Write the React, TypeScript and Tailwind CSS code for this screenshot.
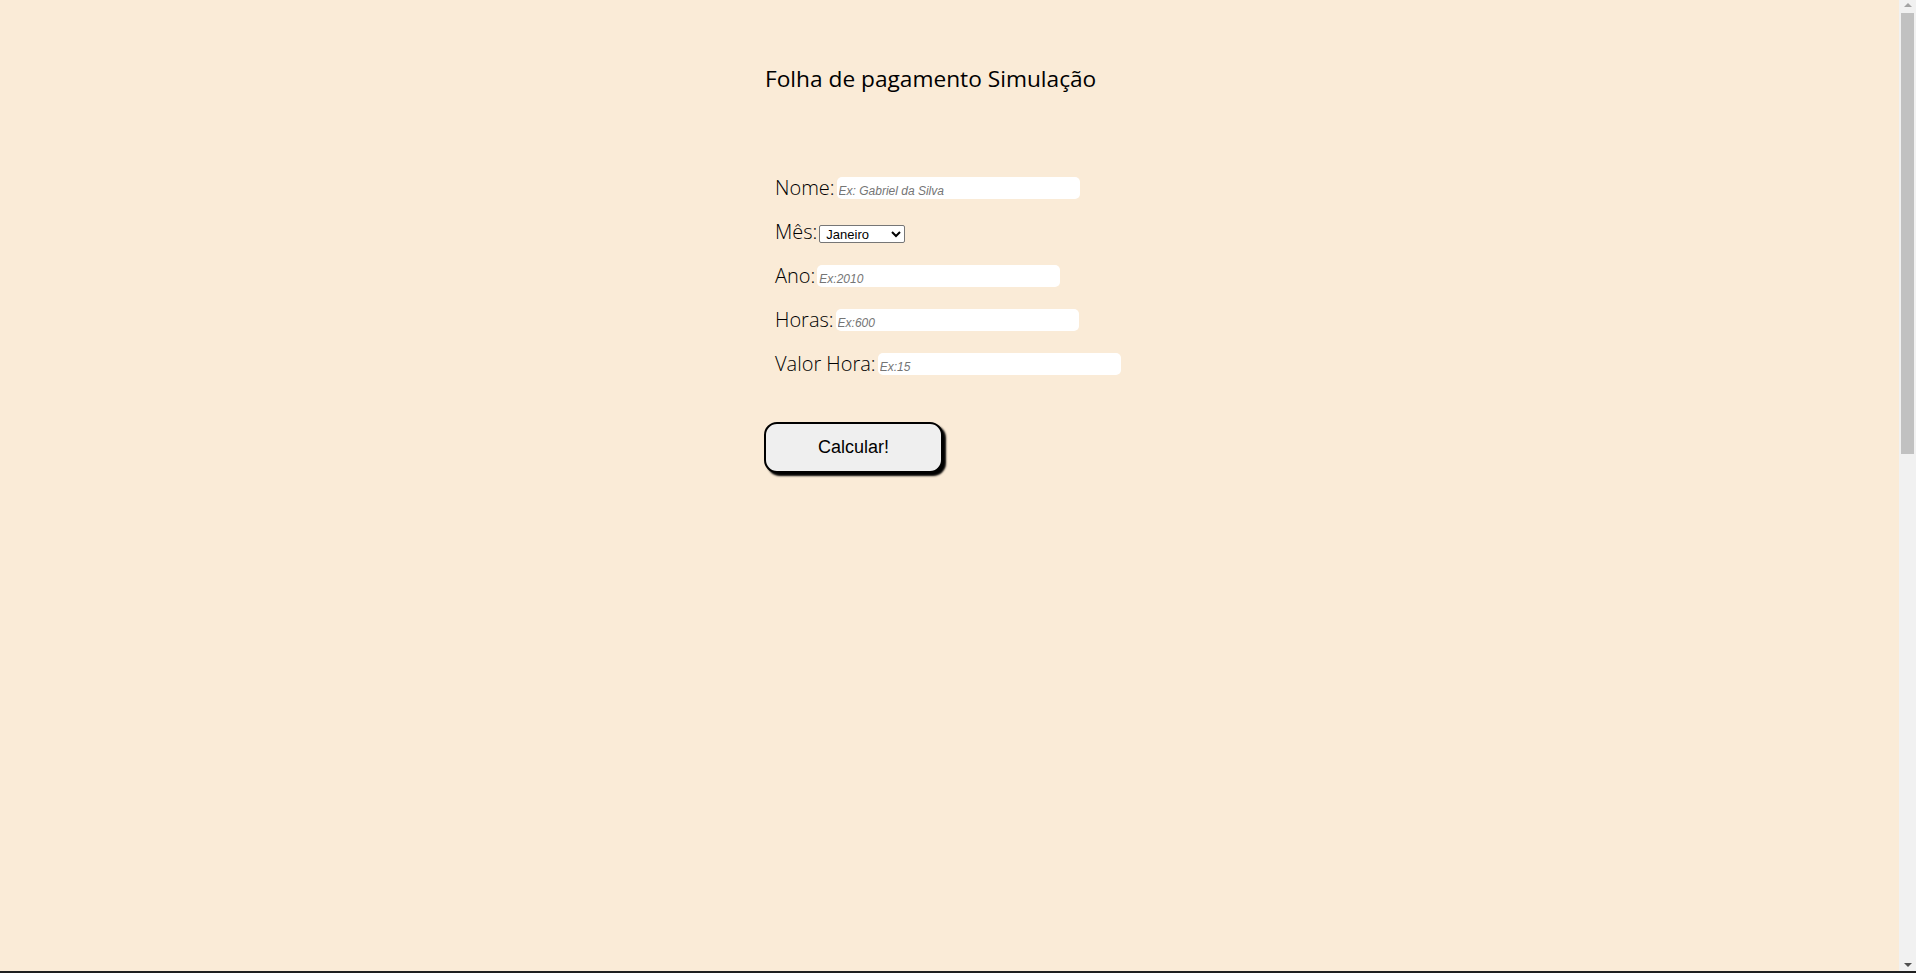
import { useState } from "react";

const MESES = [
  "Janeiro",
  "Fevereiro",
  "Março",
  "Abril",
  "Maio",
  "Junho",
  "Julho",
  "Agosto",
  "Setembro",
  "Outubro",
  "Novembro",
  "Dezembro",
];

const labelFont = { fontFamily: '"Open Sans", "Noto Sans", sans-serif' };

function Field({
  label,
  placeholder,
  value,
  onChange,
}: {
  label: string;
  placeholder: string;
  value: string;
  onChange: (v: string) => void;
}) {
  return (
    <div className="flex h-[44px] items-center gap-[2px]">
      <label className="text-[20px] font-light text-black">{label}</label>
      <input
        type="text"
        value={value}
        onChange={(e) => onChange(e.target.value)}
        placeholder={placeholder}
        className="h-[22px] w-[243px] rounded-[5px] bg-white px-[2px] pt-[6px] pb-0 font-['Liberation_Sans',Arial,sans-serif] text-[12px] italic outline-none placeholder:text-[#757575]"
      />
    </div>
  );
}

// page scrollbar, drawn
function ScrollTrack() {
  return (
    <div className="flex w-[17px] flex-col items-center bg-[#f1f1f1]">
      <div className="mt-[3px] h-0 w-0 border-x-[4px] border-b-[4px] border-x-transparent border-b-[#a3a3a3]" />
      <div className="mt-[6px] h-[441px] w-[13px] bg-[#c1c1c1]" />
      <div className="flex-1" />
      <div className="mb-[4px] h-0 w-0 border-x-[4px] border-t-[4px] border-x-transparent border-t-[#505050]" />
    </div>
  );
}

export default function App() {
  const [nome, setNome] = useState("");
  const [mes, setMes] = useState("Janeiro");
  const [ano, setAno] = useState("");
  const [horas, setHoras] = useState("");
  const [valorHora, setValorHora] = useState("");

  return (
    <div className="flex h-[973px] flex-col overflow-hidden bg-[#faebd7]">
      <div className="flex min-h-0 flex-1">
        <main className="flex-1 overflow-hidden">
          <div className="ml-[765px] w-[400px] pt-[65px]" style={labelFont}>
            {/* Title */}
            <h1 className="text-[22.7px] leading-[28px] font-normal text-black">
              Folha de pagamento Simulação
            </h1>

            {/* Form */}
            <form className="mt-[73px] pl-[10px]" onSubmit={(e) => e.preventDefault()}>
              <Field label="Nome:" placeholder="Ex: Gabriel da Silva" value={nome} onChange={setNome} />

              <div className="flex h-[44px] items-center gap-[2px]">
                <label className="text-[20px] font-light text-black">Mês:</label>
                <select
                  value={mes}
                  onChange={(e) => setMes(e.target.value)}
                  className="mt-[4px] h-[18px] w-[86px] rounded-[2px] border border-[#767676] bg-white pl-[2px] font-['Liberation_Sans',Arial,sans-serif] text-[13px] text-black"
                >
                  {MESES.map((m) => (
                    <option key={m} value={m}>
                      {m}
                    </option>
                  ))}
                </select>
              </div>

              <Field label="Ano:" placeholder="Ex:2010" value={ano} onChange={setAno} />
              <Field label="Horas:" placeholder="Ex:600" value={horas} onChange={setHoras} />
              <Field label="Valor Hora:" placeholder="Ex:15" value={valorHora} onChange={setValorHora} />
            </form>

            {/* Button */}
            <button
              type="button"
              className="mt-[36px] -ml-[1px] h-[51px] w-[179px] rounded-[13px] border-2 border-black bg-[#efefef] font-['Liberation_Sans',Arial,sans-serif] text-[18px] text-black shadow-[3px_3px_2px_#000]"
            >
              Calcular!
            </button>
          </div>
        </main>

        <ScrollTrack />
      </div>

      <div className="h-[2px] bg-[#1f1f1f]" />
    </div>
  );
}
